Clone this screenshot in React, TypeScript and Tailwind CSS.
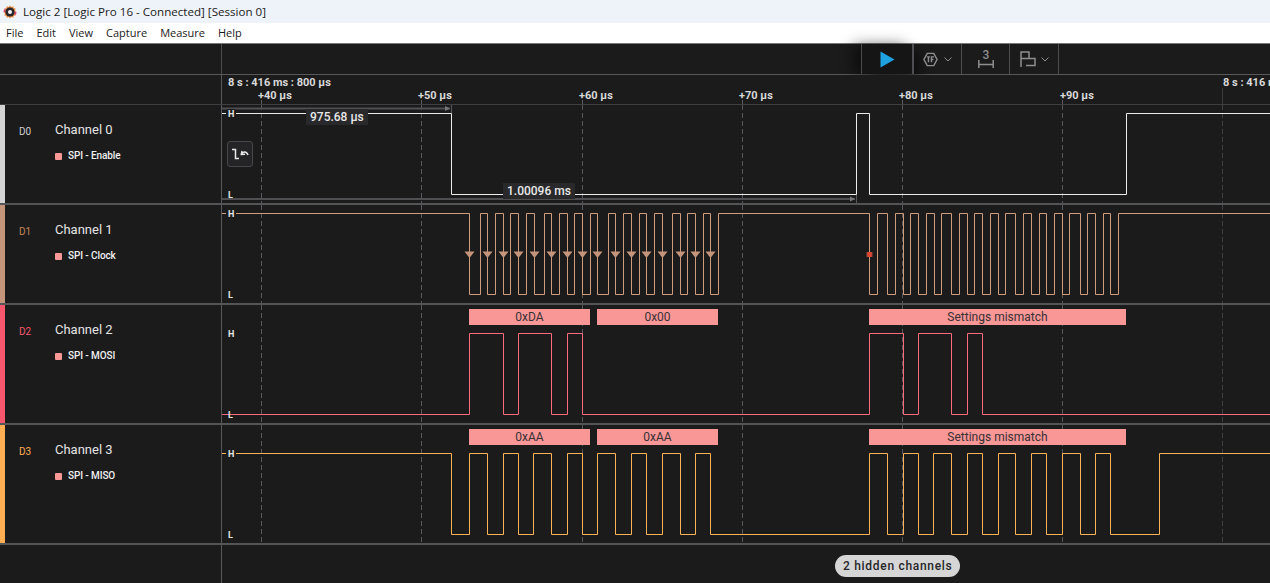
const FONT = "font-['Roboto','Liberation_Sans',sans-serif]";

const GRID = [261.5, 421.5, 582.5, 742.5, 902.5, 1062.5, 1222.5];

// edges are page x positions; the level flips at each one
function wave(edges: number[], high: number, low: number, startHigh: boolean) {
  let up = startHigh;
  let d = `M222 ${up ? high : low}`;
  for (const x of edges) {
    d += ` H${x} V${up ? low : high}`;
    up = !up;
  }
  return d + " H1270";
}

const CH0 = [451.5, 856.5, 869.5, 1126.5];
const CH1 = [
  469.5, 480.5, 487.5, 495.5, 503.5, 510.5, 518.5, 526.5, 534.5, 544.5, 551.5, 559.5, 567.5, 574.5, 582.5, 590.5,
  597.5, 608.5, 615.5, 623.5, 631.5, 639.5, 646.5, 654.5, 662.5, 672.5, 680.5, 687.5, 695.5, 703.5, 710.5, 718.5,
  869.5, 877.5, 887.5, 895.5, 903.5, 910.5, 918.5, 926.5, 934.5, 941.5, 951.5, 959.5, 967.5, 974.5, 982.5, 990.5,
  998.5, 1005.5, 1015.5, 1023.5, 1031.5, 1039.5, 1046.5, 1054.5, 1062.5, 1069.5, 1080.5, 1087.5, 1095.5, 1103.5, 1110.5, 1118.5,
];
const CH2 = [469.5, 503.5, 518.5, 551.5, 567.5, 582.5, 869.5, 903.5, 918.5, 951.5, 967.5, 982.5];
const CH3 = [
  451.5, 469.5, 487.5, 503.5, 518.5, 533.5, 551.5, 567.5, 582.5, 597.5, 615.5, 631.5, 646.5, 662.5, 680.5, 695.5, 710.5,
  869.5, 887.5, 903.5, 918.5, 933.5, 951.5, 967.5, 982.5, 998.5, 1015.5, 1031.5, 1046.5, 1062.5, 1080.5, 1095.5, 1110.5, 1159.5,
];
const ARROWS = [469.5, 487.5, 503.5, 518.5, 534.5, 551.5, 567.5, 582.5, 597.5, 615.5, 631.5, 646.5, 662.5, 680.5, 695.5, 710.5];

type Frame = { x: number; w: number; text: string };

type Channel = {
  id: string;
  name: string;
  analyzer: string;
  color: string;
  strip: string;
  idText: string;
  top: number;
  height: number;
  high: number;
  low: number;
  edges: number[];
  startHigh: boolean;
  frames: Frame[];
  rowClass: string;
};

const CHANNELS: Channel[] = [
  {
    id: "D0", name: "Channel 0", analyzer: "SPI - Enable", color: "#ececec", strip: "bg-[#d4d4d4]", idText: "text-[#d0d0d0]",
    top: 105, height: 98, high: 113.5, low: 194.5, edges: CH0, startHigh: true, frames: [], rowClass: "h-[100px]",
  },
  {
    id: "D1", name: "Channel 1", analyzer: "SPI - Clock", color: "#cf9c7c", strip: "bg-[#c4957a]", idText: "text-[#c4865a]",
    top: 205, height: 98, high: 213.5, low: 294.5, edges: CH1, startHigh: true, frames: [], rowClass: "h-[100px]",
  },
  {
    id: "D2", name: "Channel 2", analyzer: "SPI - MOSI", color: "#ff6b7d", strip: "bg-[#f8566d]", idText: "text-[#f8566d]",
    top: 305, height: 118, high: 333.5, low: 414.5, edges: CH2, startHigh: false, rowClass: "h-[120px]",
    frames: [
      { x: 469, w: 121, text: "0xDA" },
      { x: 597, w: 121, text: "0x00" },
      { x: 869, w: 257, text: "Settings mismatch" },
    ],
  },
  {
    id: "D3", name: "Channel 3", analyzer: "SPI - MISO", color: "#ffb257", strip: "bg-[#ffae52]", idText: "text-[#ffae52]",
    top: 425, height: 118, high: 453.5, low: 534.5, edges: CH3, startHigh: true, rowClass: "h-[120px]",
    frames: [
      { x: 469, w: 121, text: "0xAA" },
      { x: 597, w: 121, text: "0xAA" },
      { x: 869, w: 257, text: "Settings mismatch" },
    ],
  },
];

const MENU = ["File", "Edit", "View", "Capture", "Measure", "Help"];

function AppIcon() {
  return (
    <svg viewBox="0 0 14 14" className="w-[14px] h-[14px] shrink-0">
      <path d="M7 0.5 L8.2 2 L10.3 1.3 L10.7 3.2 L12.7 3.6 L12 5.6 L13.5 7 L12 8.4 L12.7 10.4 L10.7 10.8 L10.3 12.7 L8.2 12 L7 13.5 L5.8 12 L3.7 12.7 L3.3 10.8 L1.3 10.4 L2 8.4 L0.5 7 L2 5.6 L1.3 3.6 L3.3 3.2 L3.7 1.3 L5.8 2 Z" fill="#e8863c" />
      <path d="M1 4 L3 5 L2 7 L0.5 7 Z M13 10 L11 9 L12 7 L13.5 7 Z" fill="#d9477e" />
      <circle cx="7" cy="7" r="4.6" fill="#26262c" />
      <circle cx="7" cy="7" r="2" fill="#f4f4f4" />
    </svg>
  );
}

function Toolbar() {
  return (
    <div className="h-[31px] shrink-0 flex border-b border-[#58585b] bg-[#1b1b1c] pl-[221px]">
      <div className="flex-1 border-l border-[#4c4c50]" />
      <div className="flex h-full mr-[211px] text-[#8e8e90]">
        <div className="w-[51px] flex items-center justify-center border-l border-[#4c4c50] bg-[#151516] shadow-[-8px_0_14px_rgba(0,0,0,0.45),8px_8px_14px_rgba(0,0,0,0.45)]">
          <svg viewBox="0 0 16 18" className="w-[15px] h-[17px]">
            <path d="M0.5 0.5 L15.5 9 L0.5 17.5 Z" fill="#1fa2e0" />
          </svg>
        </div>
        <div className="w-[49px] flex items-center justify-center gap-[6px] border-l-2 border-[#4f4f53]">
          <svg viewBox="0 0 16 16" className="w-[15px] h-[15px]" fill="none" stroke="currentColor" strokeWidth="1.5">
            <path d="M4.5 1.5 H11.5 L15 8 L11.5 14.5 H4.5 L1 8 Z" />
            <path d="M4.3 5.2 H7.3 M5.8 5.2 V11 M9 11 V5.2 H11.7 M9 8 H11" />
          </svg>
          <svg viewBox="0 0 8 5" className="w-[8px] h-[5px]" fill="none" stroke="currentColor" strokeWidth="1">
            <path d="M0.5 0.5 L4 4 L7.5 0.5" />
          </svg>
        </div>
        <div className="w-[48px] relative flex items-end justify-center pb-[6px] border-l border-[#4c4c50]">
          <span className="absolute top-[6px] left-[1px] right-0 text-center text-[12px] leading-[11px] font-medium text-[#8e8e90]">3</span>
          <svg viewBox="0 0 16 8" className="w-[16px] h-[8px]" fill="none" stroke="currentColor" strokeWidth="1.5">
            <path d="M0.8 0 V8 M15.2 0 V8 M0.8 4.5 H15.2" />
          </svg>
        </div>
        <div className="w-[50px] flex items-center justify-center gap-[5px] border-x border-[#4c4c50]">
          <svg viewBox="0 0 16 16" className="w-[16px] h-[16px]" fill="none" stroke="currentColor" strokeWidth="1.5">
            <path d="M1 16 V1 H9 V7.5 H1 M9 7.5 H15 V14.5 H6" />
          </svg>
          <svg viewBox="0 0 8 5" className="w-[8px] h-[5px]" fill="none" stroke="currentColor" strokeWidth="1">
            <path d="M0.5 0.5 L4 4 L7.5 0.5" />
          </svg>
        </div>
      </div>
    </div>
  );
}

function Ruler() {
  const ticks = [
    { x: 258, text: "+40 µs" },
    { x: 418, text: "+50 µs" },
    { x: 579, text: "+60 µs" },
    { x: 739, text: "+70 µs" },
    { x: 899, text: "+80 µs" },
    { x: 1060, text: "+90 µs" },
  ];
  return (
    <div className="h-[30px] shrink-0 flex border-b border-[#3f3f42] bg-[#1b1b1c]">
      <div className="w-[222px] shrink-0 border-r border-[#58585b]" />
      <div className="relative flex-1 overflow-hidden text-[11px] leading-[13px] font-bold text-[#d8d8d8] whitespace-nowrap">
        <span className="absolute left-[6px] top-[1px]">8 s : 416 ms : 800 µs</span>
        <span className="absolute left-[1001px] top-[1px]">8 s : 416 ms : 900 µs</span>
        {ticks.map((t) => (
          <span key={t.x} className="absolute top-[14px]" style={{ left: t.x - 222 }}>
            {t.text}
          </span>
        ))}
        {GRID.slice(0, 6).map((x) => (
          <span key={x} className="absolute bottom-0 w-px h-[4px] bg-[#5c5c60]" style={{ left: x - 222.5 }} />
        ))}
        <span className="absolute bottom-0 left-[1000px] w-px h-[16px] bg-[#3a3a3e]" />
      </div>
    </div>
  );
}

function Waveform({ ch, index }: { ch: Channel; index: number }) {
  const top = ch.top;
  return (
    <div className="relative flex-1 overflow-hidden">
      <svg viewBox={`222 ${top} 1048 ${ch.height}`} className="block w-full h-full" fill="none">
        {GRID.map((x) => (
          <path key={x} d={`M${x} ${top} V${top + ch.height}`} stroke={x > 1200 ? "#3e3e42" : "#58585d"} strokeDasharray="5 3" />
        ))}
        {index === 0 && (
          <g>
            <path d="M222 108.5 H450" stroke="#4f4f52" strokeWidth="2" />
            <path d="M445 106 L450 108.5 L445 111 Z" fill="#77777a" />
            <path d="M451.5 105 V113" stroke="#58585b" />
            <path d="M222 199 H855" stroke="#4f4f52" strokeWidth="2" />
            <path d="M850 196.5 L855 199 L850 201.5 Z" fill="#77777a" />
            <path d="M856.5 195 V203" stroke="#58585b" />
          </g>
        )}
        <path d={wave(ch.edges, ch.high, ch.low, ch.startHigh)} stroke={ch.color} />
        {index === 1 &&
          ARROWS.map((x) => (
            <path key={x} d={`M${x - 5} 251.5 H${x + 5} L${x} 258 Z`} fill="#c4957a" />
          ))}
        {index === 1 && (
          <g>
            <rect x="866.5" y="252" width="6" height="5" fill="#9c4a38" />
            <rect x="867.5" y="252" width="4" height="5" fill="#e04432" />
          </g>
        )}
      </svg>
      <span className="absolute left-[4px] text-[9px] leading-[10px] font-bold text-[#e4e4e4] bg-[#1b1b1c] px-[2px] rounded-[3px]" style={{ top: ch.high - ch.top - 5 }}>
        H
      </span>
      <span className="absolute left-[6px] text-[9px] leading-[10px] font-bold text-[#e4e4e4]" style={{ top: ch.low - ch.top - 5 }}>
        L
      </span>
      {ch.frames.map((f) => (
        <div
          key={f.x}
          className="absolute top-[4px] h-[16px] bg-[#f99797] text-[#3a3033] text-[12px] leading-[16px] text-center"
          style={{ left: f.x - 222, width: f.w }}
        >
          {f.text}
        </div>
      ))}
      {index === 0 && (
        <>
          <span className="absolute left-[84px] top-[4px] px-[4px] h-[16px] bg-[#29292b] text-[#e8e8e8] text-[12px] leading-[16px] font-medium">975.68 µs</span>
          <span className="absolute left-[281px] top-[78px] px-[4px] h-[16px] bg-[#29292b] text-[#e8e8e8] text-[12px] leading-[16px] font-medium">1.00096 ms</span>
          <button className="absolute left-[5px] top-[36px] w-[26px] h-[26px] flex items-center justify-center rounded-[3px] border border-[#47474b] bg-[#242427] text-[#e8e8e8]">
            <svg viewBox="0 0 18 12" className="w-[18px] h-[12px]" fill="none" stroke="currentColor" strokeWidth="1.5">
              <path d="M1 1.5 H4.5 V10.5 H8" />
              <path d="M11 3 L10.3 6.5 L14 6.2" />
              <path d="M10.5 6 C12 3.5 15.5 3 17 7" />
            </svg>
          </button>
        </>
      )}
    </div>
  );
}

function Row({ ch, index }: { ch: Channel; index: number }) {
  return (
    <div className={`${ch.rowClass} shrink-0 flex border-b-2 border-[#545457] box-border`}>
      <div className={`w-[5px] shrink-0 ${ch.strip}`} />
      <div className="w-[217px] shrink-0 border-r border-[#58585b] flex">
        <div className={`w-[50px] pl-[14px] pt-[21px] text-[10px] leading-[12px] ${ch.idText}`}>{ch.id}</div>
        <div className="pt-[16px]">
          <div className="text-[13px] leading-[18px] text-[#e4e4e4]">{ch.name}</div>
          <div className="mt-[11px] flex items-center gap-[6px]">
            <span className="w-[7px] h-[7px] rounded-[1px] bg-[#f99797]" />
            <span className="text-[10px] leading-[12px] font-medium tracking-[-0.1px] text-[#f0f0f0]">{ch.analyzer}</span>
          </div>
        </div>
      </div>
      <Waveform ch={ch} index={index} />
    </div>
  );
}

export default function App() {
  return (
    <div className={`${FONT} w-[1270px] h-[583px] overflow-hidden bg-[#1b1b1c] flex flex-col`}>
      <div className="h-[23px] shrink-0 bg-[#eef3f9] flex items-center gap-[6px] pl-[3px] text-[11.6px] text-[#1a1a1a] font-['Open_Sans','Liberation_Sans',sans-serif]">
        <AppIcon />
        <span>Logic 2 [Logic Pro 16 - Connected] [Session 0]</span>
      </div>
      <div className="h-[21px] shrink-0 bg-white flex items-center gap-[13px] pl-[6px] text-[11px] text-[#1a1a1a] border-b border-[#777] font-['Open_Sans','Liberation_Sans',sans-serif]">
        {MENU.map((m) => (
          <span key={m}>{m}</span>
        ))}
      </div>
      <Toolbar />
      <Ruler />
      {CHANNELS.map((ch, i) => (
        <Row key={ch.id} ch={ch} index={i} />
      ))}
      <div className="flex-1 flex">
        <div className="w-[222px] shrink-0 border-r border-[#58585b]" />
        <div className="flex-1 flex items-start pt-[10px] pl-[613px]">
          <span className="h-[22px] px-[8px] rounded-full bg-[#d6d6d6] text-[#26262a] text-[12px] leading-[22px] font-medium tracking-[0.7px] whitespace-nowrap">
            2 hidden channels
          </span>
        </div>
      </div>
    </div>
  );
}
